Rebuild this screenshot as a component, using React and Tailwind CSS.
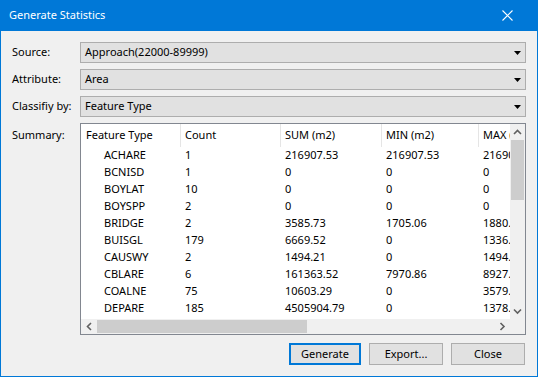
import React from 'react';

const rows = [
  ['ACHARE', '1', '216907.53', '216907.53', '216907.53'],
  ['BCNISD', '1', '0', '0', '0'],
  ['BOYLAT', '10', '0', '0', '0'],
  ['BOYSPP', '2', '0', '0', '0'],
  ['BRIDGE', '2', '3585.73', '1705.06', '1880.67'],
  ['BUISGL', '179', '6669.52', '0', '1336.18'],
  ['CAUSWY', '2', '1494.21', '0', '1494.21'],
  ['CBLARE', '6', '161363.52', '7970.86', '8927.40'],
  ['COALNE', '75', '10603.29', '0', '3579.12'],
  ['DEPARE', '185', '4505904.79', '0', '1378.11'],
];

const Arrow = () => (
  <svg width="7" height="4" viewBox="0 0 7 4" className="shrink-0">
    <path d="M0 0H7L3.5 4Z" fill="#000" />
  </svg>
);

const Combo = ({ value }) => (
  <div className="h-[21px] min-w-0 flex items-center justify-between bg-[#e1e1e1] border border-[#adadad] pl-[4px] pr-[4px]">
    <span>{value}</span>
    <Arrow />
  </div>
);

const Chevron = ({ dir }) => {
  const d = {
    up: 'M1 5L4.5 1.5L8 5',
    down: 'M1 1.5L4.5 5L8 1.5',
    left: 'M5 1L1.5 4.5L5 8',
    right: 'M1.5 1L5 4.5L1.5 8',
  }[dir];
  const vertical = dir === 'up' || dir === 'down';
  return (
    <svg width={vertical ? 9 : 7} height={vertical ? 7 : 9} viewBox={vertical ? '0 0 9 7' : '0 0 7 9'}>
      <path d={d} fill="none" stroke="#606060" strokeWidth="1.6" />
    </svg>
  );
};

const Btn = ({ children, primary, width }) => (
  <button
    className={`h-[22px] ${width} flex items-center justify-center bg-[#e1e1e1] ${
      primary ? 'border-2 border-[#0078d7]' : 'border border-[#adadad]'
    }`}
  >
    {children}
  </button>
);

export default function App() {
  const cols = 'grid grid-cols-[100px_100px_101px_97px_100px] w-[498px]';
  return (
    <div
      className="w-[538px] h-[377px] flex flex-col bg-[#f0f0f0] border-x border-b border-[#0078d7] text-[11px] text-black overflow-hidden"
      style={{ fontFamily: '"Noto Sans", "Open Sans", sans-serif' }}
    >
      {/* Title bar */}
      <div className="h-[31px] shrink-0 bg-[#0078d7] flex items-center justify-between pl-[8px] pr-[24px] text-white text-[11px]">
        <span>Generate Statistics</span>
        <svg width="11" height="11" viewBox="0 0 11 11">
          <path d="M0.5 0.5L10.5 10.5M10.5 0.5L0.5 10.5" stroke="#fff" strokeWidth="1.1" />
        </svg>
      </div>

      <div className="flex-1 flex flex-col pt-[11px] pl-[11px] pr-[11px]">
        <div className="grid grid-cols-[68px_minmax(0,1fr)] gap-y-[6px] items-center">
          <span>Source:</span>
          <Combo value="Approach(22000-89999)" />
          <span>Attribute:</span>
          <Combo value="Area" />
          <span>Classifiy by:</span>
          <Combo value="Feature Type" />
          <span className="self-start mt-[4px]">Summary:</span>
          {/* List view */}
          <div className="h-[212px] min-w-0 bg-white border border-[#828790] flex flex-col overflow-hidden">
            <div className="flex flex-1 min-h-0">
              <div className="flex-1 min-w-0 overflow-hidden">
                <div className={`${cols} h-[23px] items-center`}>
                  {['Feature Type', 'Count', 'SUM (m2)', 'MIN (m2)', 'MAX (m2)'].map((h, i) => (
                    <div
                      key={h}
                      className={`h-full flex items-center whitespace-nowrap border-r border-[#e5e5e5] ${
                        i === 0 ? 'pl-[5px]' : 'pl-[4px]'
                      }`}
                    >
                      {h}
                    </div>
                  ))}
                </div>
                {rows.map((r) => (
                  <div key={r[0]} className={`${cols} h-[17px] items-center`}>
                    <div className="pl-[23px]">{r[0]}</div>
                    <div className="pl-[4px]">{r[1]}</div>
                    <div className="pl-[4px]">{r[2]}</div>
                    <div className="pl-[4px]">{r[3]}</div>
                    <div className="pl-[4px] whitespace-nowrap">{r[4]}</div>
                  </div>
                ))}
              </div>
              {/* vertical scrollbar */}
              <div className="w-[15px] shrink-0 bg-[#f0f0f0] flex flex-col">
                <div className="h-[16px] flex items-center justify-center">
                  <Chevron dir="up" />
                </div>
                <div className="flex-1 flex flex-col px-[1px]">
                  <div className="h-[60px] bg-[#cdcdcd]" />
                </div>
                <div className="h-[16px] flex items-center justify-center">
                  <Chevron dir="down" />
                </div>
              </div>
            </div>
            {/* horizontal scrollbar */}
            <div className="h-[15px] shrink-0 flex">
              <div className="flex-1 flex bg-[#f0f0f0]">
                <div className="w-[16px] flex items-center justify-center">
                  <Chevron dir="left" />
                </div>
                <div className="flex-1 flex py-[1px]">
                  <div className="w-[210px] bg-[#cdcdcd]" />
                </div>
                <div className="w-[16px] flex items-center justify-center">
                  <Chevron dir="right" />
                </div>
              </div>
              <div className="w-[15px] bg-[#f0f0f0]" />
            </div>
          </div>
        </div>

        <div className="flex justify-end gap-[8px] mt-[8px] pr-[1px]">
          <Btn primary width="w-[72px]">Generate</Btn>
          <Btn width="w-[74px]">Export...</Btn>
          <Btn width="w-[74px]">Close</Btn>
        </div>
      </div>
    </div>
  );
}
